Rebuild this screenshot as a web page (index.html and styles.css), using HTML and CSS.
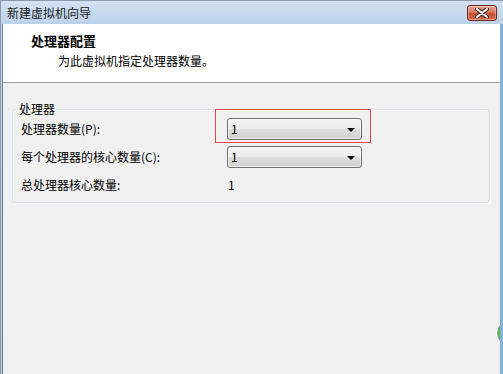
FILE: index.html
```html
<!DOCTYPE html>
<html lang="zh-CN">
<head>
<meta charset="utf-8">
<title>新建虚拟机向导</title>
<link rel="stylesheet" href="styles.css">
</head>
<body>
<div class="window">
  <div class="titlebar">
    <span class="title">新建虚拟机向导</span>
    <button class="close" aria-label="关闭">
      <svg width="14" height="10" viewBox="0 0 14 10">
        <path d="M2 1 L12 9 M12 1 L2 9" stroke="#3a1a14" stroke-width="4" stroke-linecap="round"/>
        <path d="M2 1 L12 9 M12 1 L2 9" stroke="#ffffff" stroke-width="2.2" stroke-linecap="round"/>
      </svg>
    </button>
  </div>
  <div class="client">
    <div class="header">
      <div class="h-title">处理器配置</div>
      <div class="h-sub">为此虚拟机指定处理器数量。</div>
    </div>
    <div class="content">
      <fieldset class="group">
        <legend class="legend">处理器</legend>
        <div class="rows">
          <div class="label">处理器数量(P):</div>
          <div class="combo-wrap">
            <div class="combo"><span class="val">1</span><span class="arrow"></span></div>
            <div class="highlight"></div>
          </div>
          <div class="label">每个处理器的核心数量(C):</div>
          <div class="combo-wrap">
            <div class="combo"><span class="val">1</span><span class="arrow"></span></div>
          </div>
          <div class="label">总处理器核心数量:</div>
          <div class="value">1</div>
        </div>
      </fieldset>
      <div class="orb"></div>
    </div>
  </div>
</div>
</body>
</html>
```
FILE: styles.css
```css
html, body {
  margin: 0;
  padding: 0;
}
body {
  width: 503px;
  height: 374px;
  overflow: hidden;
  font-family: "Noto Sans CJK SC", "Microsoft YaHei", sans-serif;
  font-size: 12px;
  color: #000;
  background: #f0f0f0;
}
.window {
  width: 503px;
  height: 374px;
  display: flex;
  flex-direction: column;
  background: linear-gradient(#c8d9ee, #b9cee7);
  box-sizing: border-box;
  border-top: 1px solid #8a9bb0;
  border-left: 1px solid #8a9bb0;
}
.titlebar {
  height: 23px;
  display: flex;
  align-items: center;
  justify-content: space-between;
  padding: 0 6px 0 6px;
  background: linear-gradient(#d4e2f2, #bcd1e9);
  flex: none;
}
.title {
  color: #1b1b1b;
  line-height: 14px;
  padding-top: 1px;
}
.close {
  width: 30px;
  height: 16px;
  margin-top: 1px;
  padding: 0;
  border: 1px solid #6b2a1f;
  border-radius: 3px;
  background: linear-gradient(#e9a895 0%, #d9735c 45%, #c74a2f 55%, #d66a4e 100%);
  box-shadow: inset 0 0 0 1px rgba(255,255,255,0.35);
  display: flex;
  align-items: center;
  justify-content: center;
}
.client {
  flex: 1;
  display: flex;
  flex-direction: column;
  margin-left: 1px;
  border-left: 1px solid #6c7b8c;
  background: #f0f0f0;
  position: relative;
  overflow: hidden;
  width: 497px;
  border-right: 1px solid #a8a8a8;
  box-shadow: 3px 0 0 #78b8e2;
}
.header {
  height: 59px;
  flex: none;
  background: #ffffff;
  border-bottom: 1px solid #a0a0a0;
  padding: 9px 0 0 28px;
  box-sizing: border-box;
}
.h-title {
  font-weight: bold;
  font-size: 13px;
  line-height: 16px;
}
.h-sub {
  margin-top: 4px;
  padding-left: 27px;
  line-height: 16px;
}
.content {
  flex: 1;
  padding: 19px 0 0 9px;
  position: relative;
}
.group {
  margin: 0;
  width: 478px;
  box-sizing: border-box;
  border: 1px solid #d5dfe5;
  border-radius: 3px;
  box-shadow: inset 1px 1px 0 #ffffff, 1px 1px 0 #ffffff;
  padding: 2px 0 6px 8px;
}
.legend {
  padding: 0 1px;
  margin-left: -3px;
  line-height: 14px;
}
.rows {
  display: grid;
  grid-template-columns: 206px 135px;
  grid-auto-rows: 22px;
  row-gap: 6px;
  align-items: center;
}
.label, .value {
  line-height: 14px;
}
.value {
  padding-left: 1px;
}
.combo-wrap {
  position: relative;
  height: 22px;
}
.combo {
  height: 22px;
  box-sizing: border-box;
  border: 1px solid #707070;
  border-radius: 3px;
  background: linear-gradient(#f3f3f3 0%, #ebebeb 48%, #dddddd 52%, #cfcfcf 100%);
  box-shadow: inset 0 0 0 1px rgba(255,255,255,0.6);
  display: flex;
  align-items: center;
  justify-content: space-between;
  padding: 0 6px 0 3px;
}
.val {
  line-height: 14px;
}
.arrow {
  width: 0;
  height: 0;
  border-left: 4px solid transparent;
  border-right: 4px solid transparent;
  border-top: 4px solid #000;
  margin-top: 1px;
}
.highlight {
  position: absolute;
  left: -12px;
  top: -9px;
  width: 156px;
  height: 34px;
  box-sizing: border-box;
  border: 1px solid #e0474d;
  pointer-events: none;
}
.orb {
  position: absolute;
  left: 494px;
  top: 236px;
  width: 26px;
  height: 26px;
  border-radius: 50%;
  border: 1px solid #9aa0a6;
  background: radial-gradient(circle at 40% 40%, #5fd66a, #1f9a2c);
  box-shadow: 0 0 0 1px #ffffff;
}
```
